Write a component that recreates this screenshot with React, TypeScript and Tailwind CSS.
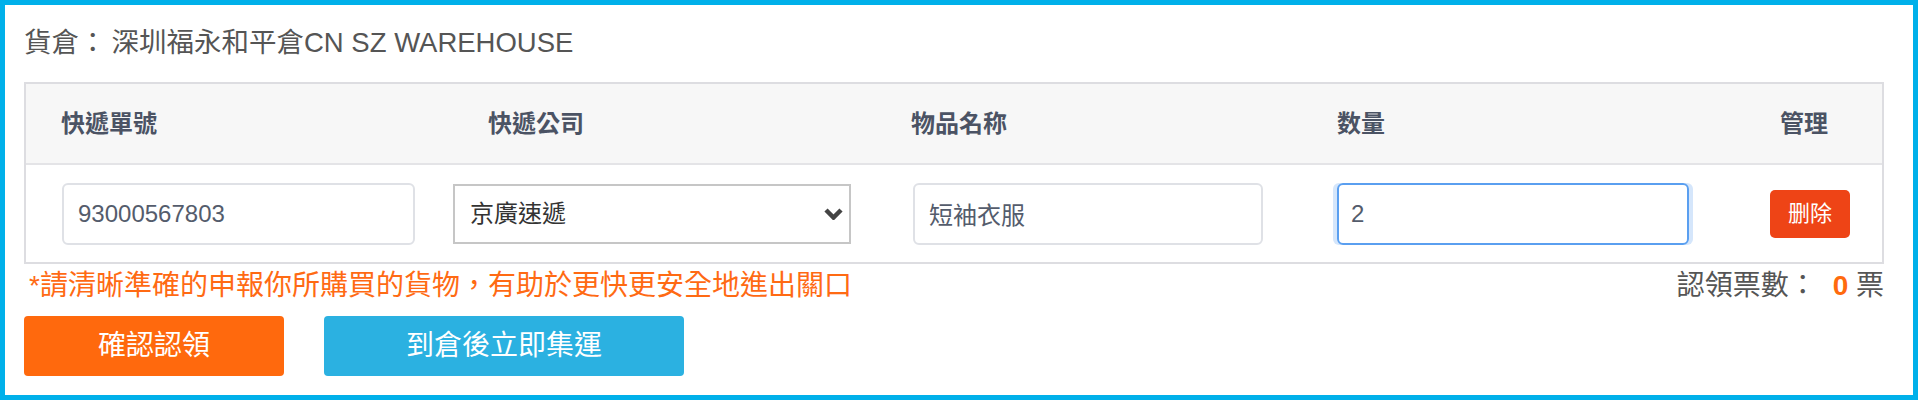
import { useState } from "react";

const font = { fontFamily: '"Liberation Sans", "Noto Sans CJK TC", sans-serif' };

const cols = "grid grid-cols-[427px_460px_424px_433px_1fr] items-center";

export default function App() {
  const [qty, setQty] = useState("2");
  const [code, setCode] = useState("93000567803");
  const [name, setName] = useState("短袖衣服");

  return (
    <div
      style={font}
      className="h-[400px] w-full border-[5px] border-[#00b0ea] bg-white pl-[19px] pr-[29px] pt-[20px]"
    >
      <h1 className="text-[27.5px] leading-[36px] text-[#555]">
        貨倉：<span className="ml-[5px]">深圳福永和平倉CN SZ WAREHOUSE</span>
      </h1>

      <div className="mt-[21px] border-2 border-[#dddde1]">
        {/* header */}
        <div className={`${cols} h-[81px] border-b-2 border-[#e4e4e7] bg-[#f7f7f7] text-[24px] font-semibold text-[#4b5364]`}>
          <div className="pl-[35px]">快遞單號</div>
          <div className="pl-[35px]">快遞公司</div>
          <div className="-ml-[2px]">物品名称</div>
          <div>数量</div>
          <div className="pl-[10px]">管理</div>
        </div>

        {/* row */}
        <div className={`${cols} h-[97px] text-[24px]`}>
          <div className="pl-[36px]">
            <input
              value={code}
              onChange={(e) => setCode(e.target.value)}
              className="h-[62px] w-[353px] rounded-md border-2 border-[#dfe1e6] px-[14px] text-[#545c6c] outline-none"
            />
          </div>
          <div>
            <div className="relative w-[398px]">
              <select className="h-[60px] w-full appearance-none border-2 border-[#c6c6c6] bg-white pl-[15px] text-[#333] outline-none">
                <option>京廣速遞</option>
                <option>順豐速運</option>
                <option>中通快遞</option>
              </select>
              <svg
                className="pointer-events-none absolute right-[8px] top-[24px] h-[12px] w-[19px]"
                viewBox="0 0 19 12"
                fill="none"
                stroke="#444"
                strokeWidth="4.5"
              >
                <path d="M2 2l7.5 7.5L17 2" />
              </svg>
            </div>
          </div>
          <div>
            <input
              value={name}
              onChange={(e) => setName(e.target.value)}
              className="h-[62px] w-[350px] rounded-md border-2 border-[#dfe1e6] px-[14px] text-[#545c6c] outline-none"
            />
          </div>
          <div>
            <input
              value={qty}
              onChange={(e) => setQty(e.target.value)}
              className="h-[62px] w-[352px] rounded-md border-2 border-[#5a9ff0] px-[12px] text-[#545c6c] shadow-[-4px_0_0_0_#d5e6fb,4px_0_0_0_#d5e6fb] outline-none"
            />
          </div>
          <div>
            <button className="h-[48px] w-[80px] rounded-[5px] bg-[#ee4416] text-[22px] text-white">删除</button>
          </div>
        </div>
      </div>

      <div className="mt-[4px] flex h-[36px] items-center justify-between">
        <p className="ml-[5px] text-[28px] leading-[36px] text-[#ff6a13]">*請清晰準確的申報你所購買的貨物，有助於更快更安全地進出關口</p>
        <p className="text-[28px] leading-[36px] text-[#555]">
          認領票數：<span className="ml-[16px] font-bold text-[#ff6a0e]">0</span>&nbsp;票
        </p>
      </div>

      <div className="mt-[12px] flex gap-[40px]">
        <button className="h-[60px] w-[260px] rounded-[4px] bg-[#ff690d] text-[28px] text-white">確認認領</button>
        <button className="h-[60px] w-[360px] rounded-[4px] bg-[#2bb1e1] text-[28px] text-white">到倉後立即集運</button>
      </div>
    </div>
  );
}
